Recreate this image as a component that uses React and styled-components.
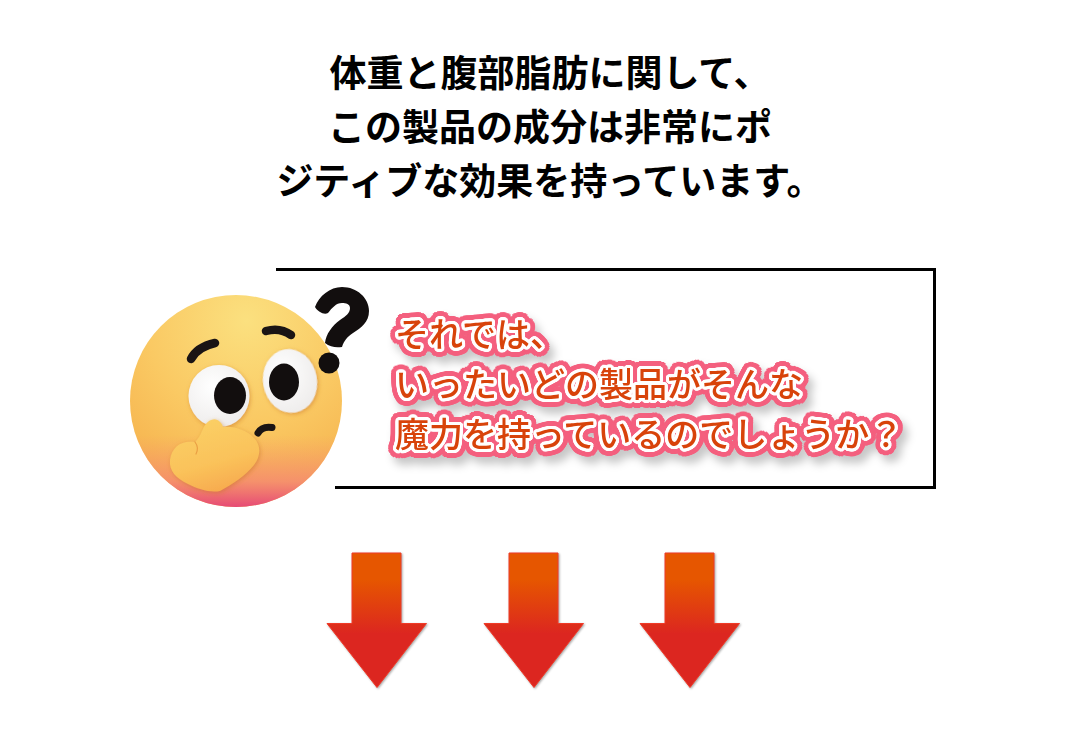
import React from "react";
import styled, { createGlobalStyle } from "styled-components";

const ringShadow = (radius, color) => {
  const parts = [];
  for (let i = 0; i < 32; i++) {
    const a = (i / 32) * Math.PI * 2;
    parts.push(`${(Math.cos(a) * radius).toFixed(2)}px ${(Math.sin(a) * radius).toFixed(2)}px 0 ${color}`);
  }
  return parts.join(", ");
};

const GlobalStyle = createGlobalStyle`
  html, body {
    margin: 0;
    padding: 0;
    background: #fff;
  }
  body {
    font-family: "Noto Sans CJK JP", "Noto Sans", sans-serif;
  }
`;

const Page = styled.div`
  width: 1080px;
  height: 745px;
  overflow: hidden;
  padding-top: 44px;
  box-sizing: border-box;
`;

const Heading = styled.h1`
  margin: 0 0 62px;
  padding-left: 20px;
  font-size: 37px;
  font-weight: 700;
  line-height: 54px;
  color: #000;
  text-align: center;
`;

const Line = styled.span`
  display: block;
`;

const Callout = styled.section`
  position: relative;
  box-sizing: border-box;
  width: 660px;
  height: 221px;
  margin-left: 276px;
  padding: 37px 0 0 119px;
  border-top: 3px solid #000;
  border-right: 3px solid #000;

  &::after {
    content: "";
    position: absolute;
    left: 59px;
    right: 0;
    bottom: 0;
    height: 3px;
    background: #000;
  }
`;

const CalloutText = styled.p`
  margin: 0;
  font-size: 34px;
  font-weight: 500;
  line-height: 50px;
  color: #d8430a;
  white-space: nowrap;
  text-shadow: ${ringShadow(1.5, "#fff")}, ${ringShadow(3, "#fff")}, ${ringShadow(5, "#f4607f")},
    ${ringShadow(6.5, "#f4607f")}, ${ringShadow(8, "#f4607f")};
  filter: drop-shadow(5px 7px 4px rgba(0, 0, 0, 0.22));
`;

const EmojiHolder = styled.div`
  position: absolute;
  left: -156px;
  top: -1px;
  width: 270px;
  height: 250px;
`;

const ArrowRow = styled.div`
  display: flex;
  gap: 54.5px;
  margin: 63px 0 0 326px;
`;

const ArrowIcon = styled.svg`
  display: block;
  width: 102px;
  height: 137px;
  filter: drop-shadow(1px 1px 1px rgba(0, 0, 0, 0.35));
`;

function ThinkingEmoji() {
  return (
    <svg width="270" height="250" viewBox="0 0 270 250">
      <defs>
        <radialGradient id="face" cx="0.55" cy="0.12" r="0.95">
          <stop offset="0" stopColor="#fbe07f" />
          <stop offset="0.5" stopColor="#fac963" />
          <stop offset="0.85" stopColor="#f6b550" />
          <stop offset="1" stopColor="#f2a846" />
        </radialGradient>
        <linearGradient id="blush" x1="0" y1="0" x2="0" y2="1">
          <stop offset="0.66" stopColor="#f79a68" stopOpacity="0" />
          <stop offset="0.88" stopColor="#f58a70" stopOpacity="0.85" />
          <stop offset="1" stopColor="#e64a76" />
        </linearGradient>
        <linearGradient id="hand" x1="0.3" y1="0" x2="0.65" y2="1">
          <stop offset="0" stopColor="#fbd066" />
          <stop offset="0.6" stopColor="#fac25a" />
          <stop offset="1" stopColor="#f7a94e" />
        </linearGradient>
        <radialGradient id="white" cx="0.4" cy="0.35" r="0.8">
          <stop offset="0" stopColor="#ffffff" />
          <stop offset="1" stopColor="#ebe9e8" />
        </radialGradient>
        <filter id="soft" x="-20%" y="-20%" width="140%" height="140%">
          <feDropShadow dx="1" dy="1.5" stdDeviation="2" floodColor="#c9762c" floodOpacity="0.55" />
        </filter>
      </defs>
      <circle cx="116" cy="131" r="106" fill="url(#face)" />
      <circle cx="116" cy="131" r="106" fill="url(#blush)" />
      <path d="M71 89Q77 77 95 73" fill="none" stroke="#1a1414" strokeWidth="8.5" strokeLinecap="round" />
      <path d="M146 61Q160 57 171 65" fill="none" stroke="#1a1414" strokeWidth="8.5" strokeLinecap="round" />
      <ellipse cx="99" cy="126" rx="30.5" ry="31" fill="url(#white)" filter="url(#soft)" />
      <ellipse cx="110" cy="125.5" rx="16" ry="18.5" fill="#120e0e" />
      <ellipse cx="170" cy="111" rx="27" ry="32" transform="rotate(-10 170 111)" fill="url(#white)" filter="url(#soft)" />
      <ellipse cx="164" cy="112" rx="15" ry="18.5" fill="#120e0e" />
      <path
        d="M195 37C199 26 210 17 222 17C237 17 249 28 249 41C249 52 241 58 233 63C227 67 224 71 222 77C216 78 210 77 205 73C206 64 212 56 220 50C226 46 230 43 230 38C230 34 226 33 222 33C216 33 212 38 208 43C204 45 198 42 195 37Z"
        fill="#120e0e"
      />
      <circle cx="209" cy="93" r="10.5" fill="#120e0e" />
      <path d="M138 163Q142 156 152 157.5" fill="none" stroke="#1a1414" strokeWidth="7" strokeLinecap="round" />
      <path
        d="M50 190C52 176 62 170 75 172C80 168 82 160 85 155C89 149 96 147 100 152C103 155 103 157 103 157C115 156 126 160 134 168C141 175 141 186 134 195C125 206 113 214 100 221C90 223 78 219 68 214C56 208 49 201 50 190Z"
        fill="url(#hand)"
        filter="url(#soft)"
      />
      <path d="M75 172C78 176 78 180 76 184" fill="none" stroke="#ea9f43" strokeWidth="1.2" strokeLinecap="round" />
    </svg>
  );
}

function DownArrow({ id }) {
  return (
    <ArrowIcon viewBox="0 0 102 137">
      <defs>
        <linearGradient id={id} x1="0" y1="0" x2="0" y2="1">
          <stop offset="0.2" stopColor="#e65600" />
          <stop offset="0.6" stopColor="#dc2620" />
        </linearGradient>
      </defs>
      <path d="M26 1H75V71.5H100.5L51 135.5L1 71.5H26Z" fill={`url(#${id})`} stroke="#f03a28" strokeWidth="1" />
    </ArrowIcon>
  );
}

export default function App() {
  return (
    <Page>
      <GlobalStyle />
      <Heading>
        <Line>体重と腹部脂肪に関して、</Line>
        <Line>この製品の成分は非常にポ</Line>
        <Line>ジティブな効果を持っています。</Line>
      </Heading>
      <Callout>
        <EmojiHolder>
          <ThinkingEmoji />
        </EmojiHolder>
        <CalloutText>
          それでは、
          <br />
          いったいどの製品がそんな
          <br />
          魔力を持っているのでしょうか？
        </CalloutText>
      </Callout>
      <ArrowRow>
        <DownArrow id="arrow-a" />
        <DownArrow id="arrow-b" />
        <DownArrow id="arrow-c" />
      </ArrowRow>
    </Page>
  );
}
